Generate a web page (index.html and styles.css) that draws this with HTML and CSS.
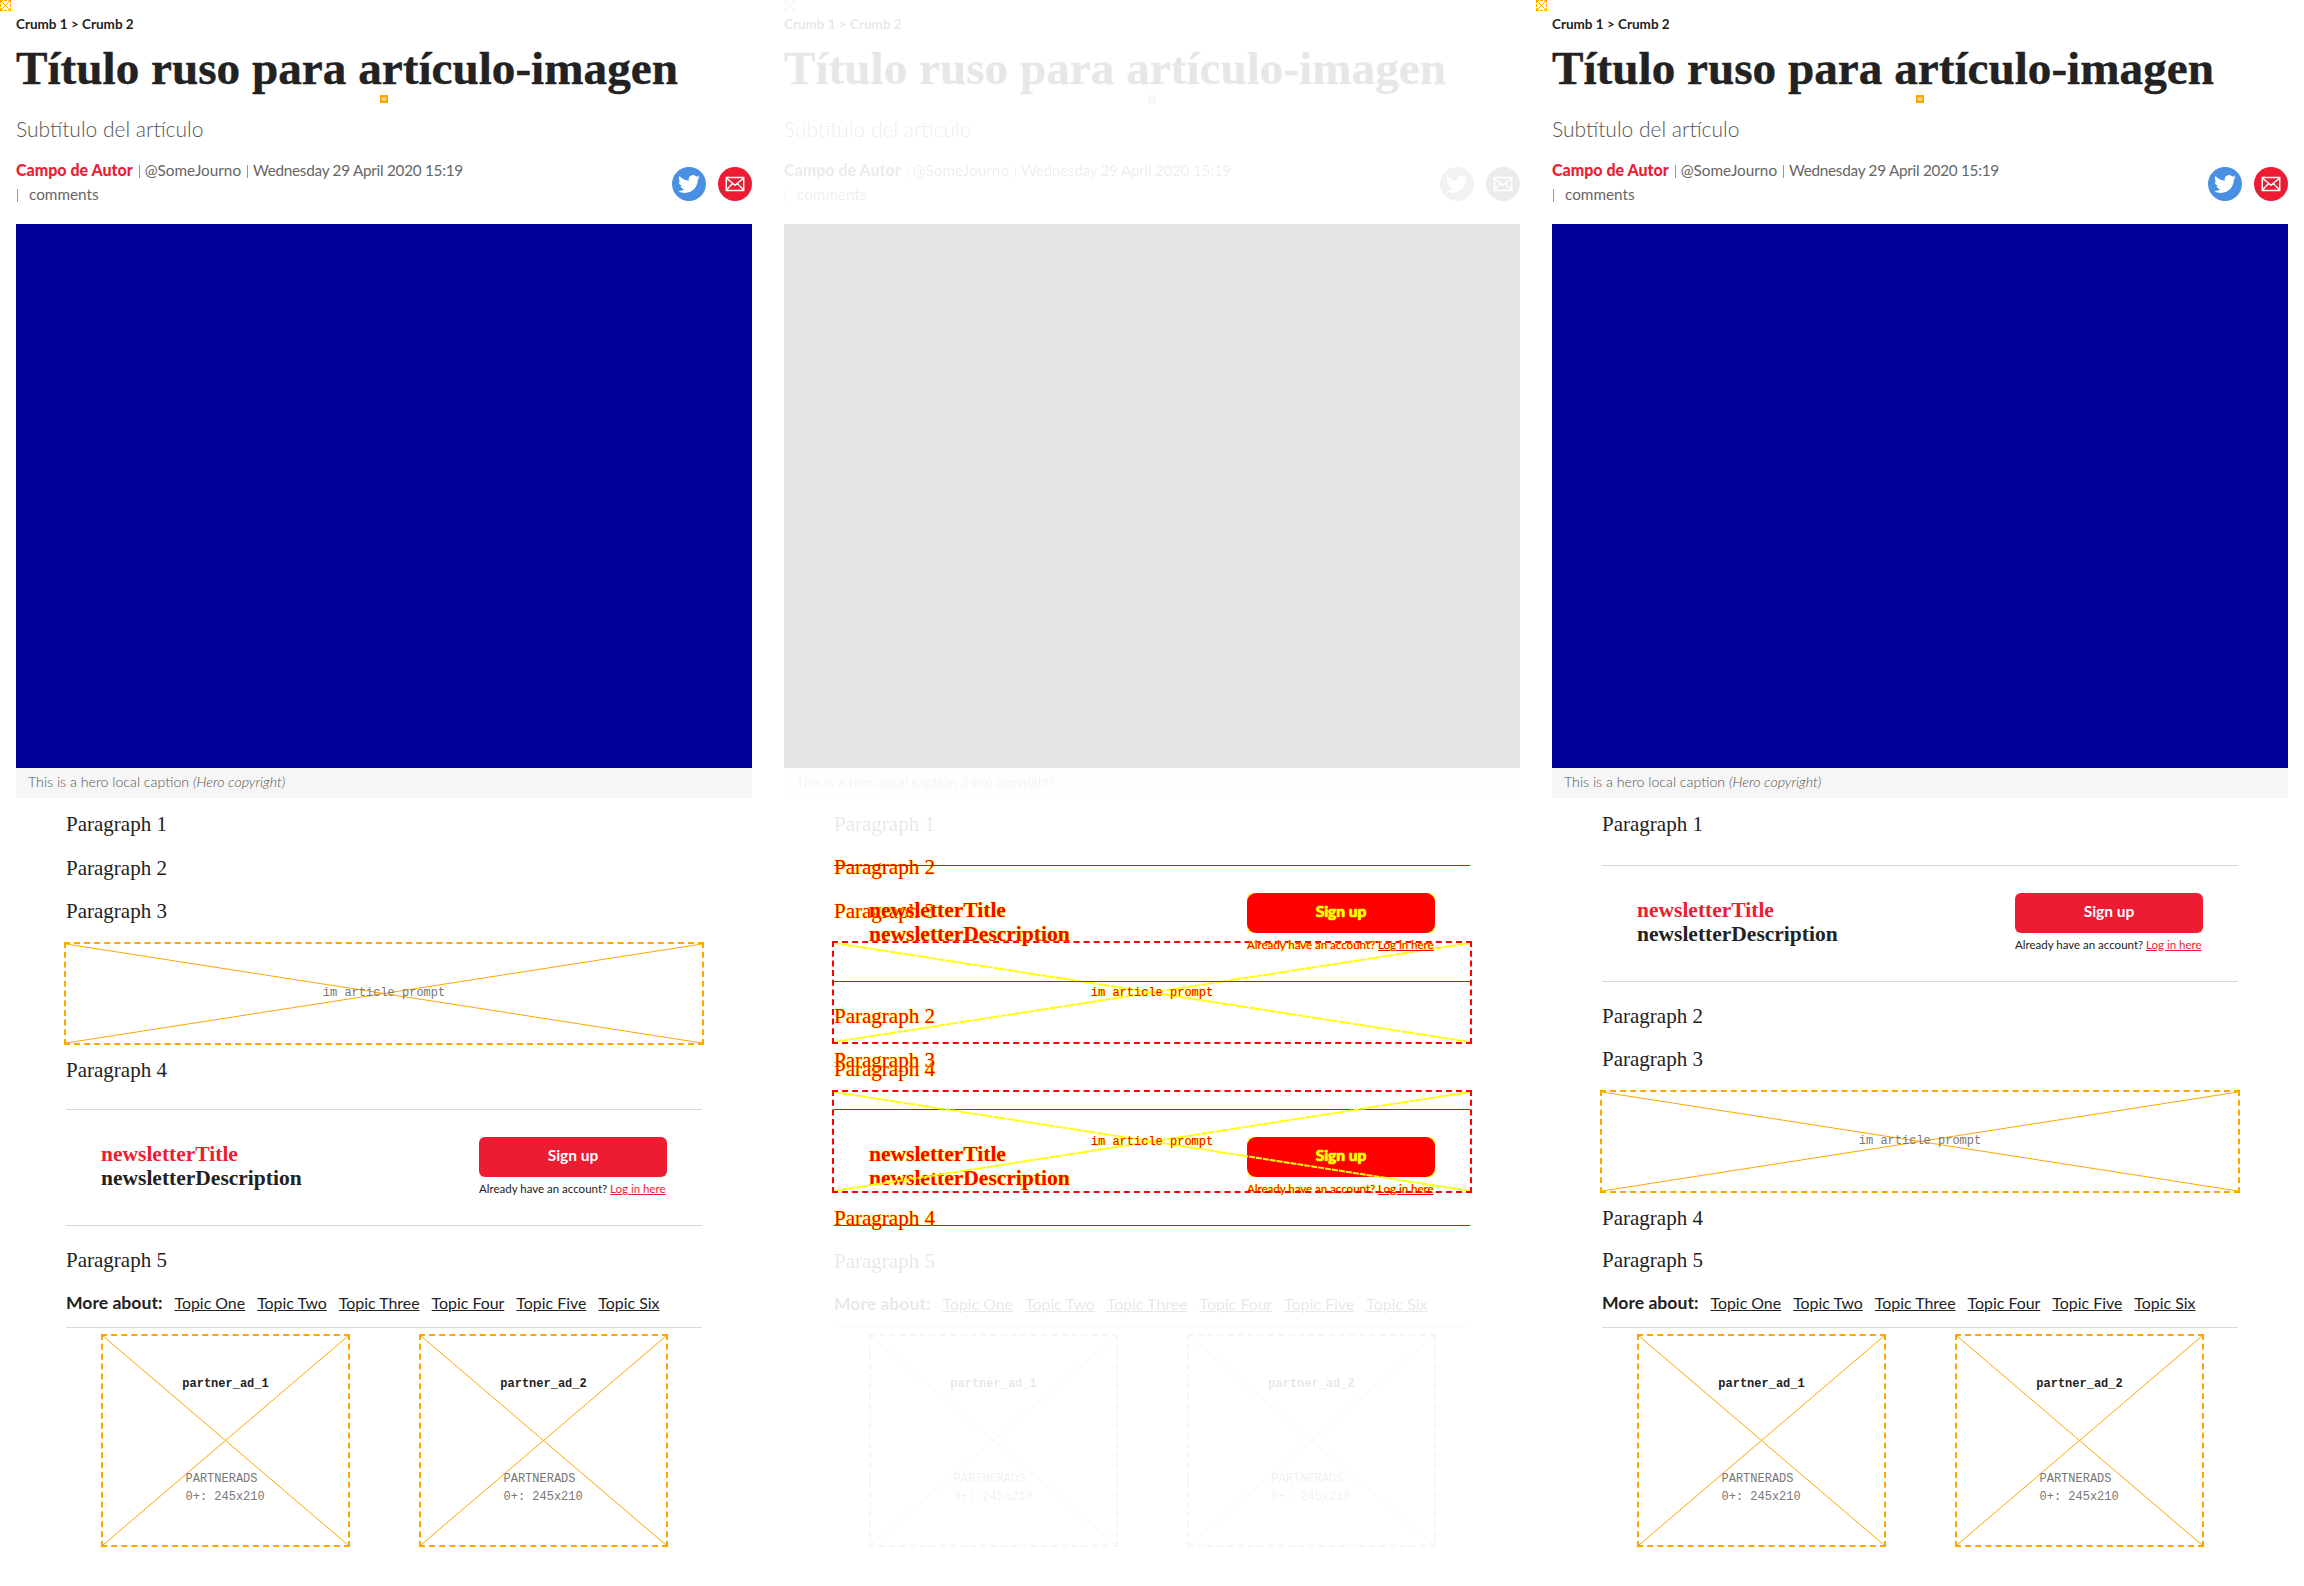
FILE: index.html
```html
<!DOCTYPE html>
<html lang="en">
<head>
    <meta charset="UTF-8">
    <title>Título ruso para artículo-imagen</title>
    <link rel="stylesheet" href="styles.css">
</head>
<body>
    <div class="page">
        <!-- baseline -->
        <section class="col">
            <div class="corner-ad"><svg class="cross" viewBox="0 0 100 100" preserveAspectRatio="none"><line x1="0" y1="0" x2="100" y2="100"/><line x1="100" y1="0" x2="0" y2="100"/></svg></div>
            <div class="crumbs">Crumb 1 &gt; Crumb 2</div>
            <h1 class="title">Título ruso para artículo-imagen</h1>
            <div class="title-marker"></div>
            <p class="subtitle">Subtítulo del artículo</p>
            <div class="meta">
                <div class="byline">
                    <div><b class="author">Campo de Autor</b> <i class="sep"></i>@SomeJourno <i class="sep"></i><span class="date">Wednesday 29 April 2020 15:19</span></div>
                    <div><i class="sep sep-wide"></i>comments</div>
                </div>
                <div class="share">
                    <span class="share-btn twitter"><svg viewBox="0 0 24 24"><path d="M23.953 4.57a10 10 0 01-2.825.775 4.958 4.958 0 002.163-2.723c-.951.555-2.005.959-3.127 1.184a4.92 4.92 0 00-8.384 4.482C7.69 8.095 4.067 6.13 1.64 3.162a4.822 4.822 0 00-.666 2.475c0 1.71.87 3.213 2.188 4.096a4.904 4.904 0 01-2.228-.616v.06a4.923 4.923 0 003.946 4.827 4.996 4.996 0 01-2.212.085 4.936 4.936 0 004.604 3.417 9.867 9.867 0 01-6.102 2.105c-.39 0-.779-.023-1.17-.067a13.995 13.995 0 007.557 2.209c9.053 0 13.998-7.496 13.998-13.985 0-.21 0-.42-.015-.63A9.935 9.935 0 0024 4.59z"/></svg></span>
                    <span class="share-btn mail"><svg viewBox="0 0 24 24"><path class="mail-lines" d="M2.5 5h19v14h-19zM2.5 5.5l9.5 8 9.5-8M2.5 18.5l7-7M21.5 18.5l-7-7"/></svg></span>
                </div>
            </div>
            <div class="hero"></div>
            <div class="caption">This is a hero local caption <em>(Hero copyright)</em></div>
            <div class="body">
                <p class="para">Paragraph 1</p>
                <p class="para">Paragraph 2</p>
                <p class="para">Paragraph 3</p>
                <div class="prompt"><svg class="cross" viewBox="0 0 100 100" preserveAspectRatio="none"><line x1="0" y1="0" x2="100" y2="100"/><line x1="100" y1="0" x2="0" y2="100"/></svg><span>im article prompt</span></div>
                <p class="para para-after-prompt">Paragraph 4</p>
                <div class="newsletter">
                    <div class="nl-text">
                        <div class="nl-title">newsletterTitle</div>
                        <div class="nl-desc">newsletterDescription</div>
                    </div>
                    <div class="nl-action">
                        <div class="nl-button"><span>Sign up</span></div>
                        <div class="nl-login">Already have an account? <a>Log in here</a></div>
                    </div>
                </div>
                <p class="para">Paragraph 5</p>
                <div class="topics">
                    <b>More about:</b>
                    <a>Topic One</a><a>Topic Two</a><a>Topic Three</a><a>Topic Four</a><a>Topic Five</a><a>Topic Six</a>
                </div>
                <div class="partners">
                    <div class="partner"><svg class="cross" viewBox="0 0 100 100" preserveAspectRatio="none"><line x1="0" y1="0" x2="100" y2="100"/><line x1="100" y1="0" x2="0" y2="100"/></svg><b>partner_ad_1</b><div class="partner-info">PARTNERADS<br>0+: 245x210</div></div>
                    <div class="partner"><svg class="cross" viewBox="0 0 100 100" preserveAspectRatio="none"><line x1="0" y1="0" x2="100" y2="100"/><line x1="100" y1="0" x2="0" y2="100"/></svg><b>partner_ad_2</b><div class="partner-info">PARTNERADS<br>0+: 245x210</div></div>
                </div>
            </div>
        </section>

        <!-- diff -->
        <section class="col">
            <div class="ghost">
                <div class="corner-ad"><svg class="cross" viewBox="0 0 100 100" preserveAspectRatio="none"><line x1="0" y1="0" x2="100" y2="100"/><line x1="100" y1="0" x2="0" y2="100"/></svg></div>
                <div class="crumbs">Crumb 1 &gt; Crumb 2</div>
                <h1 class="title">Título ruso para artículo-imagen</h1>
                <div class="title-marker"></div>
                <p class="subtitle">Subtítulo del artículo</p>
                <div class="meta">
                    <div class="byline">
                        <div><b class="author">Campo de Autor</b> <i class="sep"></i>@SomeJourno <i class="sep"></i><span class="date">Wednesday 29 April 2020 15:19</span></div>
                        <div><i class="sep sep-wide"></i>comments</div>
                    </div>
                    <div class="share">
                        <span class="share-btn twitter"><svg viewBox="0 0 24 24"><path d="M23.953 4.57a10 10 0 01-2.825.775 4.958 4.958 0 002.163-2.723c-.951.555-2.005.959-3.127 1.184a4.92 4.92 0 00-8.384 4.482C7.69 8.095 4.067 6.13 1.64 3.162a4.822 4.822 0 00-.666 2.475c0 1.71.87 3.213 2.188 4.096a4.904 4.904 0 01-2.228-.616v.06a4.923 4.923 0 003.946 4.827 4.996 4.996 0 01-2.212.085 4.936 4.936 0 004.604 3.417 9.867 9.867 0 01-6.102 2.105c-.39 0-.779-.023-1.17-.067a13.995 13.995 0 007.557 2.209c9.053 0 13.998-7.496 13.998-13.985 0-.21 0-.42-.015-.63A9.935 9.935 0 0024 4.59z"/></svg></span>
                        <span class="share-btn mail"><svg viewBox="0 0 24 24"><path class="mail-lines" d="M2.5 5h19v14h-19zM2.5 5.5l9.5 8 9.5-8M2.5 18.5l7-7M21.5 18.5l-7-7"/></svg></span>
                    </div>
                </div>
                <div class="hero"></div>
                <div class="caption">This is a hero local caption <em>(Hero copyright)</em></div>
                <div class="body">
                    <p class="para">Paragraph 1</p>
                    <div class="ghost-gap"></div>
                    <p class="para">Paragraph 5</p>
                    <div class="topics">
                        <b>More about:</b>
                        <a>Topic One</a><a>Topic Two</a><a>Topic Three</a><a>Topic Four</a><a>Topic Five</a><a>Topic Six</a>
                    </div>
                    <div class="partners">
                        <div class="partner"><svg class="cross" viewBox="0 0 100 100" preserveAspectRatio="none"><line x1="0" y1="0" x2="100" y2="100"/><line x1="100" y1="0" x2="0" y2="100"/></svg><b>partner_ad_1</b><div class="partner-info">PARTNERADS<br>0+: 245x210</div></div>
                        <div class="partner"><svg class="cross" viewBox="0 0 100 100" preserveAspectRatio="none"><line x1="0" y1="0" x2="100" y2="100"/><line x1="100" y1="0" x2="0" y2="100"/></svg><b>partner_ad_2</b><div class="partner-info">PARTNERADS<br>0+: 245x210</div></div>
                    </div>
                </div>
            </div>

            <!-- old order -->
            <div class="body diff diff-old">
                <p class="para">Paragraph 2</p>
                <p class="para">Paragraph 3</p>
                <div class="prompt"><svg class="cross" viewBox="0 0 100 100" preserveAspectRatio="none"><line x1="0" y1="0" x2="100" y2="100"/><line x1="100" y1="0" x2="0" y2="100"/></svg><span>im article prompt</span></div>
                <p class="para para-after-prompt">Paragraph 4</p>
                <div class="newsletter">
                    <div class="nl-text">
                        <div class="nl-title">newsletterTitle</div>
                        <div class="nl-desc">newsletterDescription</div>
                    </div>
                    <div class="nl-action">
                        <div class="nl-button"><span>Sign up</span></div>
                        <div class="nl-login">Already have an account? <a>Log in here</a></div>
                    </div>
                </div>
            </div>

            <!-- new order -->
            <div class="body diff diff-new">
                <div class="newsletter">
                    <div class="nl-text">
                        <div class="nl-title">newsletterTitle</div>
                        <div class="nl-desc">newsletterDescription</div>
                    </div>
                    <div class="nl-action">
                        <div class="nl-button"><span>Sign up</span></div>
                        <div class="nl-login">Already have an account? <a>Log in here</a></div>
                    </div>
                </div>
                <p class="para">Paragraph 2</p>
                <p class="para">Paragraph 3</p>
                <div class="prompt"><svg class="cross" viewBox="0 0 100 100" preserveAspectRatio="none"><line x1="0" y1="0" x2="100" y2="100"/><line x1="100" y1="0" x2="0" y2="100"/></svg><span>im article prompt</span></div>
                <p class="para para-after-prompt">Paragraph 4</p>
            </div>
        </section>

        <!-- current -->
        <section class="col">
            <div class="corner-ad"><svg class="cross" viewBox="0 0 100 100" preserveAspectRatio="none"><line x1="0" y1="0" x2="100" y2="100"/><line x1="100" y1="0" x2="0" y2="100"/></svg></div>
            <div class="crumbs">Crumb 1 &gt; Crumb 2</div>
            <h1 class="title">Título ruso para artículo-imagen</h1>
            <div class="title-marker"></div>
            <p class="subtitle">Subtítulo del artículo</p>
            <div class="meta">
                <div class="byline">
                    <div><b class="author">Campo de Autor</b> <i class="sep"></i>@SomeJourno <i class="sep"></i><span class="date">Wednesday 29 April 2020 15:19</span></div>
                    <div><i class="sep sep-wide"></i>comments</div>
                </div>
                <div class="share">
                    <span class="share-btn twitter"><svg viewBox="0 0 24 24"><path d="M23.953 4.57a10 10 0 01-2.825.775 4.958 4.958 0 002.163-2.723c-.951.555-2.005.959-3.127 1.184a4.92 4.92 0 00-8.384 4.482C7.69 8.095 4.067 6.13 1.64 3.162a4.822 4.822 0 00-.666 2.475c0 1.71.87 3.213 2.188 4.096a4.904 4.904 0 01-2.228-.616v.06a4.923 4.923 0 003.946 4.827 4.996 4.996 0 01-2.212.085 4.936 4.936 0 004.604 3.417 9.867 9.867 0 01-6.102 2.105c-.39 0-.779-.023-1.17-.067a13.995 13.995 0 007.557 2.209c9.053 0 13.998-7.496 13.998-13.985 0-.21 0-.42-.015-.63A9.935 9.935 0 0024 4.59z"/></svg></span>
                    <span class="share-btn mail"><svg viewBox="0 0 24 24"><path class="mail-lines" d="M2.5 5h19v14h-19zM2.5 5.5l9.5 8 9.5-8M2.5 18.5l7-7M21.5 18.5l-7-7"/></svg></span>
                </div>
            </div>
            <div class="hero"></div>
            <div class="caption">This is a hero local caption <em>(Hero copyright)</em></div>
            <div class="body">
                <p class="para">Paragraph 1</p>
                <div class="newsletter newsletter-early">
                    <div class="nl-text">
                        <div class="nl-title">newsletterTitle</div>
                        <div class="nl-desc">newsletterDescription</div>
                    </div>
                    <div class="nl-action">
                        <div class="nl-button"><span>Sign up</span></div>
                        <div class="nl-login">Already have an account? <a>Log in here</a></div>
                    </div>
                </div>
                <p class="para">Paragraph 2</p>
                <p class="para">Paragraph 3</p>
                <div class="prompt"><svg class="cross" viewBox="0 0 100 100" preserveAspectRatio="none"><line x1="0" y1="0" x2="100" y2="100"/><line x1="100" y1="0" x2="0" y2="100"/></svg><span>im article prompt</span></div>
                <p class="para para-after-prompt">Paragraph 4</p>
                <p class="para">Paragraph 5</p>
                <div class="topics">
                    <b>More about:</b>
                    <a>Topic One</a><a>Topic Two</a><a>Topic Three</a><a>Topic Four</a><a>Topic Five</a><a>Topic Six</a>
                </div>
                <div class="partners">
                    <div class="partner"><svg class="cross" viewBox="0 0 100 100" preserveAspectRatio="none"><line x1="0" y1="0" x2="100" y2="100"/><line x1="100" y1="0" x2="0" y2="100"/></svg><b>partner_ad_1</b><div class="partner-info">PARTNERADS<br>0+: 245x210</div></div>
                    <div class="partner"><svg class="cross" viewBox="0 0 100 100" preserveAspectRatio="none"><line x1="0" y1="0" x2="100" y2="100"/><line x1="100" y1="0" x2="0" y2="100"/></svg><b>partner_ad_2</b><div class="partner-info">PARTNERADS<br>0+: 245x210</div></div>
                </div>
            </div>
        </section>
    </div>
</body>
</html>
```

FILE: styles.css
```css
body {
    margin: 0;
    background: #fff;
    color: #222;
    font-family: "Lato", "Noto Sans", sans-serif;
}
p {
    margin: 0;
}
.page {
    display: grid;
    grid-template-columns: repeat(3, 768px);
    height: 1586px;
    overflow: hidden;
}
.col {
    position: relative;
    padding: 0 16px;
}
.ghost {
    filter: grayscale(1);
    opacity: 0.1;
}
.ghost-gap {
    height: 393px;
}

/* placeholders */
.cross {
    position: absolute;
    left: 0;
    top: 0;
    width: 100%;
    height: 100%;
}
.cross line {
    stroke: #ffa500;
    stroke-width: 1px;
    vector-effect: non-scaling-stroke;
}
.corner-ad {
    position: absolute;
    left: 0;
    top: 0;
    width: 11px;
    height: 11px;
    box-sizing: border-box;
    border: 1px dashed #ffa500;
}

/* header */
.crumbs {
    padding-top: 14px;
    font-size: 13.5px;
    font-weight: 700;
    line-height: 20px;
}
.title {
    margin: 8px 0 0;
    font-family: "Liberation Serif", serif;
    font-size: 47.2px;
    font-weight: 700;
    line-height: 52px;
    white-space: nowrap;
    -webkit-text-stroke: 0.4px #222;
}
.title-marker {
    width: 8px;
    height: 8px;
    margin: 1px auto 0;
    background: #ffa500;
    box-sizing: border-box;
    border: 3px solid #ffa500;
    position: relative;
}
.title-marker::after {
    content: "";
    position: absolute;
    left: -1px;
    top: -1px;
    width: 4px;
    height: 4px;
    box-sizing: border-box;
    border: 1px solid #fff;
    border-radius: 50%;
}
.subtitle {
    margin-top: 13px;
    font-size: 21px;
    font-weight: 300;
    line-height: 26px;
    color: #555;
}
.meta {
    display: flex;
    justify-content: space-between;
    align-items: flex-start;
    margin-top: 16px;
}
.byline {
    font-size: 15.3px;
    line-height: 24px;
    color: #666;
}
.author {
    color: #ed1c32;
    font-size: 16px;
    font-weight: 900;
}
.date {
    letter-spacing: -0.27px;
}
.sep {
    display: inline-block;
    width: 1px;
    height: 13px;
    margin: 0 5px 0 2px;
    background: #999;
    vertical-align: -2px;
}
.sep-wide {
    margin: 0 11px 0 1px;
}
.share {
    display: flex;
    gap: 12px;
    margin-top: 9px;
}
.share-btn {
    display: flex;
    align-items: center;
    justify-content: center;
    width: 34px;
    height: 34px;
    border-radius: 50%;
}
.share-btn svg {
    width: 22px;
    height: 22px;
    fill: #fff;
}
.twitter {
    background: #4a90e2;
}
.mail {
    background: #ed1c32;
}
.mail-lines {
    fill: none;
    stroke: #fff;
    stroke-width: 1.6;
}
.hero {
    height: 544px;
    margin-top: 18px;
    background: #000099;
}
.caption {
    height: 30px;
    padding-left: 12px;
    background: #f6f6f6;
    font-size: 14.2px;
    font-weight: 300;
    line-height: 27px;
    color: #555;
}

/* article body */
.body {
    padding: 13px 50px 0;
}
.para {
    font-family: "Liberation Serif", serif;
    font-size: 21px;
    line-height: 27.5px;
    margin-bottom: 16px;
}
.prompt {
    position: relative;
    height: 103px;
    margin: 0 -2px;
    box-sizing: border-box;
    border: 2px dashed #ffa500;
    display: flex;
    align-items: center;
    justify-content: center;
    font-family: "Liberation Mono", monospace;
    font-size: 12px;
    color: #777;
}
.prompt span {
    position: relative;
}
.para-after-prompt {
    margin-top: 12px;
}
.para-after-prompt + .para {
    margin-top: -1px;
}
.newsletter {
    display: flex;
    justify-content: space-between;
    height: 117px;
    margin-top: 26px;
    margin-bottom: 21px;
    padding: 27px 35px 0;
    box-sizing: border-box;
    border-top: 1px solid #d8d8d8;
    border-bottom: 1px solid #d8d8d8;
}
.para-after-prompt + .newsletter {
    margin-top: 25px;
}
.nl-text {
    padding-top: 5px;
    font-family: "Liberation Serif", serif;
    font-size: 21.5px;
    font-weight: 700;
    line-height: 24px;
}
.nl-title {
    color: #ed1c32;
}
.nl-action {
    width: 188px;
}
.nl-button {
    height: 40px;
    border-radius: 6px;
    background: #ed1c32;
    color: #fff;
    font-size: 15.5px;
    font-weight: 700;
    line-height: 36px;
    text-align: center;
}
.nl-button span {
    display: block;
    height: 100%;
    border-radius: inherit;
}
.nl-login {
    margin-top: 4px;
    font-size: 11.5px;
    line-height: 16px;
    white-space: nowrap;
    color: #222;
}
.nl-login a {
    color: #ed1c32;
    text-decoration: underline;
}
.topics {
    display: flex;
    align-items: center;
    gap: 12px;
    height: 32px;
    padding-bottom: 8px;
    margin-top: -4px;
    font-size: 15.9px;
    border-bottom: 1px solid #d8d8d8;
    white-space: nowrap;
}
.topics b {
    font-size: 17.6px;
}
.topics a {
    text-decoration: underline;
}
.partners {
    display: flex;
    justify-content: space-between;
    padding: 6px 34px 0 35px;
}
.partner {
    position: relative;
    width: 249px;
    height: 213px;
    box-sizing: border-box;
    border: 2px dashed #ffa500;
    font-family: "Liberation Mono", monospace;
    font-size: 12px;
    text-align: center;
    padding-top: 41px;
}
.partner b {
    position: relative;
    display: block;
    line-height: 14px;
}
.partner-info {
    position: relative;
    width: 80px;
    margin: 79px auto 0;
    text-align: left;
    line-height: 18px;
    white-space: nowrap;
    color: #777;
}

/* diff highlight */
.diff {
    position: absolute;
    left: 16px;
    right: 16px;
    padding-top: 0;
}
.diff-old {
    top: 854px;
}
.diff-new {
    top: 839px;
}
.diff,
.diff .nl-title,
.diff .nl-login,
.diff .nl-login a,
.diff .prompt {
    color: #f00;
    text-shadow: 0 0 1px #ff0, 0 0 1px #ff0, 0 0 1px #ff0;
}
.diff .newsletter {
    border-color: #f00;
}
.diff .prompt {
    border-color: #f00;
}
.diff .cross line {
    stroke: #ff0;
    stroke-width: 2px;
    stroke-dasharray: 6 1;
}
.diff .nl-button {
    background: #ff0;
    color: #ff0;
}
.diff .nl-button span {
    background: #f00;
    border-radius: 9px;
}
```
